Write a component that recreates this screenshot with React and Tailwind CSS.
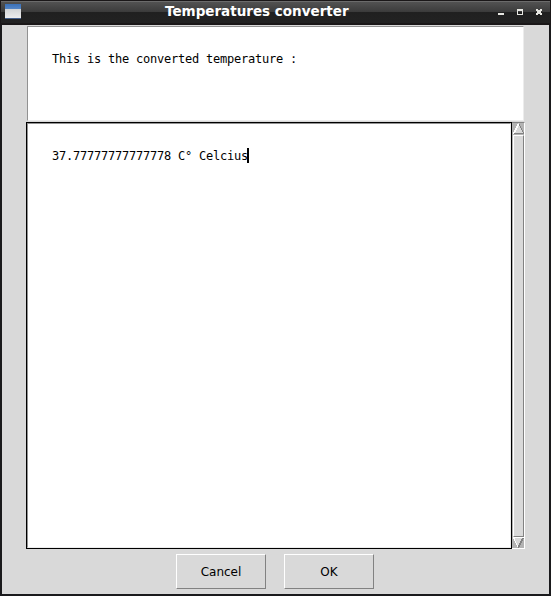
function WindowIcon() {
  return (
    <svg width="18" height="18" viewBox="0 0 18 18" shapeRendering="crispEdges">
      <defs>
        <linearGradient id="bar" x1="0" y1="0" x2="0" y2="1">
          <stop offset="0" stopColor="#3a70b8" />
          <stop offset="1" stopColor="#5586c6" />
        </linearGradient>
        <linearGradient id="pane" x1="0" y1="0" x2="0" y2="1">
          <stop offset="0" stopColor="#d2d4d6" />
          <stop offset="1" stopColor="#ececec" />
        </linearGradient>
      </defs>
      <rect x="1" y="1" width="16" height="5" fill="url(#bar)" />
      <rect x="1" y="6" width="16" height="9" fill="url(#pane)" />
      <rect x="1" y="15" width="16" height="1" fill="#46608c" />
    </svg>
  );
}

function TitleBar() {
  return (
    <header className="flex h-[25px] shrink-0 flex-col border-t border-[#1a1718] bg-[#1a1718]">
      <div className="mx-px flex h-[22px] items-start border-t border-[#6b6b6b] bg-[linear-gradient(to_bottom,#525252_0px,#3b3b3b_10px,#202020_10px,#222222_21px)]">
        <div className="ml-[3px] mt-px h-[18px] w-[18px]">
          <WindowIcon />
        </div>
        <h1 className="ml-[143px] mt-px w-[190px] whitespace-nowrap text-[13.5px] font-bold leading-[16px] text-white">
          Temperatures converter
        </h1>
        <svg className="ml-auto mr-[7px] mt-[6px]" width="45" height="9" viewBox="0 0 45 9" shapeRendering="crispEdges" fill="#e6e6e1">
          <rect x="0" y="5" width="6" height="2" />
          <path fillRule="evenodd" d="M19 1h6v6h-6zM20 3v3h4v-3z" />
          <path d="M38 1h2v1h2v-1h2v2h-1v2h1v2h-2v-1h-2v1h-2v-2h1v-2h-1z" />
        </svg>
      </div>
    </header>
  );
}

function Scrollbar() {
  return (
    <div className="flex h-[427px] w-[13px] flex-col border-r border-t border-b border-r-white border-t-[#828282] border-b-white bg-[#b3b3b3] pl-px">
      <svg width="11" height="11" viewBox="0 0 11 11" shapeRendering="crispEdges">
        <path d="M5 0h1v2h1v2h1v2h1v2h1v3H0v-1h1v-2h1v-2h1v-2h1v-2h1z" fill="#d9d9d9" />
        <path d="M4 1h2v2h-2zM3 3h2v2h-2zM2 5h2v2h-2zM1 7h2v2h-2zM0 9h2v2h-2z" fill="#fff" />
        <path d="M6 1h1v2h-1zM7 3h1v2h-1zM8 5h1v2h-1zM9 7h1v2h-1zM10 9h1v2h-1zM1 10h10v1h-10z" fill="#828282" />
      </svg>
      <div className="mt-px h-[402px] w-[11px] border border-b-[#828282] border-l-white border-r-[#828282] border-t-white bg-[#d9d9d9]" />
      <svg width="11" height="11" viewBox="0 0 11 11" shapeRendering="crispEdges">
        <path d="M0 0h11v2h-1v2h-1v2h-1v2h-1v2h-3v-2h-1v-2h-1v-2h-1v-2h-1z" fill="#d9d9d9" />
        <path d="M0 0h11v1h-11zM0 1h2v1h-2zM1 2h1v2h-1zM2 4h1v2h-1zM3 6h1v2h-1zM4 8h1v2h-1z" fill="#fff" />
        <path d="M9 1h2v1h-2zM8 2h2v2h-2zM7 4h2v2h-2zM6 6h2v2h-2zM5 8h2v2h-2zM5 10h1v1h-1z" fill="#828282" />
      </svg>
    </div>
  );
}

function Button({ children }) {
  return (
    <button className="flex h-[35px] w-[90px] items-center justify-center border border-b-[#828282] border-l-white border-r-[#828282] border-t-white bg-[#d9d9d9] text-[12px] leading-[14px] text-black">
      {children}
    </button>
  );
}

export default function App() {
  return (
    <div className="flex h-[596px] w-[551px] flex-col overflow-hidden bg-[#1a1a1c] font-['DejaVu_Sans',sans-serif]">
      <TitleBar />
      <main className="mx-[2px] mb-[2px] flex grow flex-col bg-[#d9d9d9] pt-px">
        <section className="mb-px ml-[25px] h-[95px] w-[497px] border border-b-[#ececec] border-l-[#929292] border-r-[#ececec] border-t-[#929292] bg-white pl-[24px] pt-[25px]">
          <p className="whitespace-pre font-['DejaVu_Sans_Mono',monospace] text-[12px] leading-[14px] tracking-[-0.224px] text-black">
            This is the converted temperature :
          </p>
        </section>
        <section className="ml-[24px] flex">
          <div className="h-[427px] w-[486px] border border-black">
            <div className="flex h-full items-start border border-b-[#ececec] border-l-[#929292] border-r-[#ececec] border-t-[#929292] bg-white pl-[24px] pt-[24px]">
              <p className="mt-px whitespace-pre font-['DejaVu_Sans_Mono',monospace] text-[12px] leading-[14px] tracking-[-0.224px] text-black">
                37.77777777777778 C° Celcius
              </p>
              <span className="-ml-px h-[15px] w-[2px] bg-black" />
            </div>
          </div>
          <Scrollbar />
        </section>
        <footer className="ml-[174px] mt-[5px] flex gap-[18px]">
          <Button>Cancel</Button>
          <Button>OK</Button>
        </footer>
      </main>
    </div>
  );
}
